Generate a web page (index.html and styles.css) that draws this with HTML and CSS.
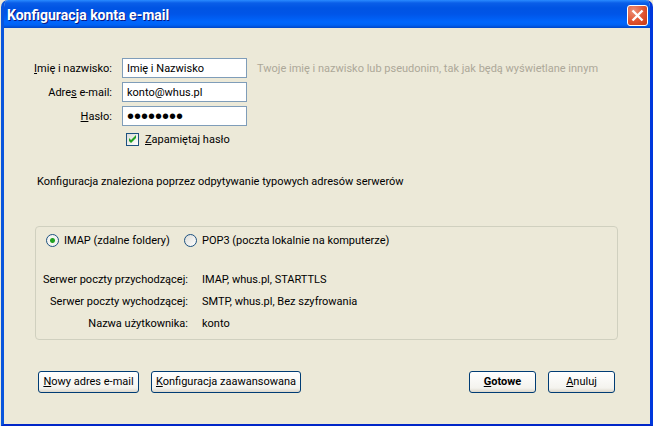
FILE: index.html
```html
<!DOCTYPE html>
<html lang="pl">
<head>
<meta charset="utf-8">
<title>Konfiguracja konta e-mail</title>
<link rel="stylesheet" href="styles.css">
</head>
<body>
<main class="window">
  <header class="titlebar">
    <h1 class="title">Konfiguracja konta e-mail</h1>
    <button class="close" type="button" aria-label="Zamknij">
      <svg viewBox="0 0 13 13" width="13" height="13" aria-hidden="true"><path d="M1.5 1.5L11.5 11.5M11.5 1.5L1.5 11.5" stroke="#fff" stroke-width="2.4"/></svg>
    </button>
  </header>
  <form class="content">
    <div class="fields">
      <label class="name" for="fullname"><u>I</u>mię i nazwisko:</label>
      <input class="text" id="fullname" type="text" value="Imię i Nazwisko">
      <span class="hint">Twoje imię i nazwisko lub pseudonim, tak jak będą wyświetlane innym</span>
      <label class="name" for="email">Adre<u>s</u> e-mail:</label>
      <input class="text" id="email" type="text" value="konto@whus.pl">
      <label class="name" for="password"><u>H</u>asło:</label>
      <input class="text password" id="password" type="password" value="12345678">
    </div>
    <label class="remember"><input class="check" type="checkbox" checked><span><u>Z</u>apamiętaj hasło</span></label>
    <p class="status">Konfiguracja znaleziona poprzez odpytywanie typowych adresów serwerów</p>
    <section class="group">
      <div class="choices">
        <label class="choice"><input class="radio" type="radio" name="protocol" checked><span>IMAP (zdalne foldery)</span></label>
        <label class="choice"><input class="radio" type="radio" name="protocol"><span>POP3 (poczta lokalnie na komputerze)</span></label>
      </div>
      <dl class="servers">
        <dt>Serwer poczty przychodzącej:</dt><dd>IMAP, whus.pl, STARTTLS</dd>
        <dt>Serwer poczty wychodzącej:</dt><dd>SMTP, whus.pl, Bez szyfrowania</dd>
        <dt>Nazwa użytkownika:</dt><dd>konto</dd>
      </dl>
    </section>
    <footer class="actions">
      <button class="button" type="button"><u>N</u>owy adres e-mail</button>
      <button class="button wide" type="button"><u>K</u>onfiguracja zaawansowana</button>
      <span class="spacer"></span>
      <button class="button short primary" type="button"><u>G</u>otowe</button>
      <button class="button short" type="button"><u>A</u>nuluj</button>
    </footer>
  </form>
</main>
</body>
</html>
```
FILE: styles.css
```css
* { box-sizing: border-box; }
body {
  margin: 0;
  background: #ece9d8;
  color: #000;
  font: 11px/14px Roboto, Tahoma, sans-serif;
}
button, input { font: inherit; color: inherit; margin: 0; }
u { text-underline-offset: 1px; text-decoration-thickness: 1px; }
.window {
  display: flex;
  flex-direction: column;
  min-height: 100vh;
  margin-left: 1px;
  border: solid;
  border-width: 0 3px 2px;
  border-color: #0019cf #0038dc #0026c8 #0855dd;
  border-radius: 7px 7px 0 0;
  overflow: hidden;
}
.titlebar {
  display: flex;
  align-items: center;
  justify-content: space-between;
  height: 28px;
  margin: 0 -3px;
  padding: 2px 5px 0 6px;
  background: linear-gradient(#2a8bff 0, #0a5ee8 3px, #0054e3 8px, #0055e8 14px, #0066fd 22px, #0062f4 25px, #0046c8 28px);
}
.title {
  margin: 0;
  color: #fff;
  font: bold 14px/16px Roboto, "Trebuchet MS", sans-serif;
  text-shadow: 1px 1px #0a1883;
}
.close {
  display: grid;
  place-items: center;
  width: 21px;
  height: 21px;
  padding: 0;
  border: 1px solid #fff;
  border-radius: 3px;
  background: radial-gradient(circle at 30% 25%, #ec9078, #e0532f 55%, #c63a12);
}
.content {
  display: flex;
  flex-direction: column;
  flex: 1;
  padding: 30px 32px 30px 31px;
}
.fields {
  display: grid;
  grid-template-columns: 77px 125px 1fr;
  gap: 4px 10px;
  align-items: center;
}
.name { grid-column: 1; text-align: right; white-space: nowrap; justify-self: end; }
.name, .hint { padding-top: 2px; }
.text {
  width: 100%;
  height: 20px;
  padding: 0 4px;
  border: 1px solid #7f9db9;
  border-radius: 0;
  background: #fff;
}
.password { font: 20px/18px "Liberation Sans", sans-serif; }
.hint { color: #aca899; white-space: nowrap; }
.remember {
  display: flex;
  align-items: center;
  gap: 6px;
  align-self: flex-start;
  margin: 5px 0 0 91px;
}
.remember span, .choice span { padding-top: 2px; }
.check, .radio {
  appearance: none;
  width: 13px;
  height: 13px;
  border: 1px solid #1c5180;
  background: linear-gradient(135deg, #dcdcd7, #fff);
}
.check:checked {
  background: url("data:image/svg+xml,%3Csvg xmlns='http://www.w3.org/2000/svg' viewBox='0 0 11 11'%3E%3Cpath d='M2 4v3l2 2 5-5V1L4 6z' fill='%2321a121'/%3E%3C/svg%3E"), linear-gradient(135deg, #dcdcd7, #fff);
}
.radio { border-radius: 50%; }
.radio:checked { background: radial-gradient(circle, #21a121 2px, #f4f4f0 3px); }
.status { margin: 28px 0 0 2px; }
.group {
  margin-top: 37px;
  padding: 5px 10px 8px 7px;
  border: 1px solid #d0d0bf;
  border-radius: 4px;
}
.choices { display: flex; }
.choice { display: flex; align-items: center; gap: 5px; white-space: nowrap; }
.choice:first-child { width: 141px; padding-left: 3px; }
.servers {
  display: grid;
  grid-template-columns: 145px 1fr;
  gap: 8px 14px;
  margin: 25px 0 0;
}
.servers dt { justify-self: end; white-space: nowrap; }
.servers dd { margin: 0; }
.actions {
  display: flex;
  gap: 12px;
  margin: 31px 3px 0;
}
.spacer { flex: 1; }
.button {
  width: 101px;
  height: 22px;
  padding: 0;
  border: 1px solid #003c74;
  border-radius: 3px;
  background: linear-gradient(#fff, #f4f3ee 80%, #dcd7cb);
  white-space: nowrap;
}
.wide { width: 150px; }
.short { width: 67px; }
.primary { font-weight: bold; }
```
